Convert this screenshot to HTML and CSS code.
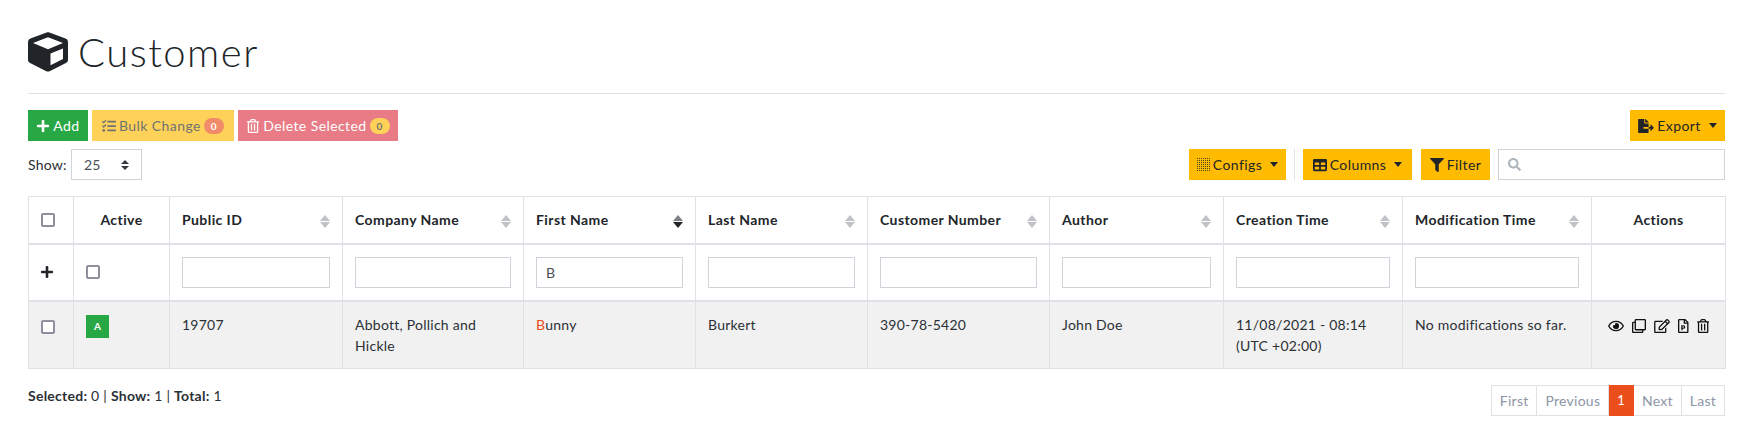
FILE: index.html
```html
<!DOCTYPE html>
<html lang="en">
<head>
    <meta charset="UTF-8">
    <title>Customer</title>
    <link rel="stylesheet" href="styles.css">
</head>
<body>
    <svg class="sprite" xmlns="http://www.w3.org/2000/svg">
        <symbol id="i-plus" viewBox="0 0 448 512"><path d="M416 208H272V64c0-17.67-14.33-32-32-32h-32c-17.67 0-32 14.33-32 32v144H32c-17.67 0-32 14.33-32 32v32c0 17.67 14.33 32 32 32h144v144c0 17.67 14.33 32 32 32h32c17.67 0 32-14.33 32-32V304h144c17.67 0 32-14.33 32-32v-32c0-17.67-14.33-32-32-32z"/></symbol>
        <symbol id="i-trash" viewBox="0 0 448 512"><path d="M268 416h24a12 12 0 0 0 12-12V188a12 12 0 0 0-12-12h-24a12 12 0 0 0-12 12v216a12 12 0 0 0 12 12zM432 80h-82.41l-34-56.7A48 48 0 0 0 274.41 0H173.59a48 48 0 0 0-41.16 23.3L98.41 80H16A16 16 0 0 0 0 96v16a16 16 0 0 0 16 16h16v336a48 48 0 0 0 48 48h288a48 48 0 0 0 48-48V128h16a16 16 0 0 0 16-16V96a16 16 0 0 0-16-16zM171.84 50.91A6 6 0 0 1 177 48h94a6 6 0 0 1 5.15 2.91L293.61 80H154.39zM368 464H80V128h288zm-212-48h24a12 12 0 0 0 12-12V188a12 12 0 0 0-12-12h-24a12 12 0 0 0-12 12v216a12 12 0 0 0 12 12z"/></symbol>
    </svg>

    <main class="page">
        <h1 class="title">
            <svg class="title-icon" viewBox="0 0 512 512"><path d="M239.1 6.3l-208 78c-18.7 7-31.1 25-31.1 45v225.1c0 18.2 10.3 34.8 26.5 42.9l208 104c13.5 6.8 29.4 6.8 42.9 0l208-104c16.3-8.1 26.5-24.8 26.5-42.9V129.3c0-20-12.4-37.9-31.1-44.9l-208-78C262 2.2 250 2.2 239.1 6.3zM256 68.4l192 72v1.1l-192 78-192-78v-1.1l192-72zm32 356V275.5l160-65v133.9l-160 80z"/></svg>
            Customer
        </h1>
        <hr class="divider">

        <div class="toolbar">
            <div class="group">
                <button class="btn btn-green btn-add"><svg class="ico"><use href="#i-plus"/></svg> Add</button>
                <button class="btn btn-yellow btn-off btn-bulk">
                    <svg class="ico" viewBox="0 0 512 512"><path d="M139.61 35.5a12 12 0 0 0-17 0L58.93 98.81l-22.7-22.12a12 12 0 0 0-17 0L3.53 92.41a12 12 0 0 0 0 17l47.59 47.4a12.78 12.78 0 0 0 17.61 0l15.59-15.62L156.52 69a12.09 12.09 0 0 0 .09-17zm0 159.19a12 12 0 0 0-17 0l-63.68 63.72-22.7-22.1a12 12 0 0 0-17 0L3.53 252a12 12 0 0 0 0 17L51 316.5a12.77 12.77 0 0 0 17.6 0l15.7-15.69 72.2-72.22a12 12 0 0 0 .09-16.9zM64 368c-26.49 0-48.59 21.5-48.59 48S37.53 464 64 464a48 48 0 0 0 0-96zm432 16H208a16 16 0 0 0-16 16v32a16 16 0 0 0 16 16h288a16 16 0 0 0 16-16v-32a16 16 0 0 0-16-16zm0-320H208a16 16 0 0 0-16 16v32a16 16 0 0 0 16 16h288a16 16 0 0 0 16-16V80a16 16 0 0 0-16-16zm0 160H208a16 16 0 0 0-16 16v32a16 16 0 0 0 16 16h288a16 16 0 0 0 16-16v-32a16 16 0 0 0-16-16z"/></svg>
                    Bulk Change <span class="count count-orange">0</span>
                </button>
                <button class="btn btn-red btn-off btn-delete"><svg class="ico"><use href="#i-trash"/></svg> Delete Selected <span class="count count-yellow">0</span></button>
            </div>
            <div class="group">
                <button class="btn btn-yellow btn-export">
                    <svg class="ico ico-wide" viewBox="0 0 576 512"><path d="M384 121.9c0-6.3-2.5-12.4-7-16.9L279.1 7c-4.5-4.5-10.6-7-17-7H256v128h128zM571 308l-95.7-96.4c-10.1-10.1-27.4-3-27.4 11.3V288h-64v64h64v65.2c0 14.3 17.3 21.4 27.4 11.3L571 332c6.6-6.6 6.6-17.4 0-24zm-379 28v-32c0-8.8 7.2-16 16-16h176V160H248c-13.2 0-24-10.8-24-24V0H24C10.7 0 0 10.7 0 24v464c0 13.3 10.7 24 24 24h336c13.3 0 24-10.7 24-24V352H208c-8.8 0-16-7.2-16-16z"/></svg>
                    Export <span class="caret"></span>
                </button>
            </div>
        </div>

        <div class="toolbar toolbar-second">
            <div class="group show">
                <label class="show-label" for="pageSize">Show:</label>
                <div class="select-wrap">
                    <select id="pageSize" class="select"><option>25</option><option>50</option><option>100</option></select>
                </div>
            </div>
            <div class="group tools">
                <button class="btn btn-yellow btn-configs">
                    <svg class="ico ico-dots" viewBox="0 0 13 13">
                        <defs><pattern id="dots" width="2" height="2" patternUnits="userSpaceOnUse"><rect width="1" height="1"/></pattern></defs>
                        <rect width="13" height="13" fill="url(#dots)"/>
                    </svg>
                    Configs <span class="caret"></span>
                </button>
                <span class="sep"></span>
                <button class="btn btn-yellow btn-columns">
                    <svg class="ico" viewBox="0 0 512 512"><path d="M464 32H48C21.49 32 0 53.49 0 80v352c0 26.51 21.49 48 48 48h416c26.51 0 48-21.49 48-48V80c0-26.51-21.49-48-48-48zM224 416H64v-96h160v96zm0-160H64v-96h160v96zm224 160H288v-96h160v96zm0-160H288v-96h160v96z"/></svg>
                    Columns <span class="caret"></span>
                </button>
                <button class="btn btn-yellow btn-filter">
                    <svg class="ico" viewBox="0 0 512 512"><path d="M487.976 0H24.028C2.71 0-8.047 25.866 7.058 40.971L192 225.941V432c0 7.831 3.821 15.17 10.237 19.662l80 55.98C298.02 518.69 320 507.493 320 487.98V225.941l184.947-184.97C520.021 25.896 509.338 0 487.976 0z"/></svg>
                    Filter
                </button>
                <div class="search">
                    <svg class="search-icon" viewBox="0 0 512 512"><path d="M505 442.7L405.3 343c-4.5-4.5-10.6-7-17-7H372c27.6-35.3 44-79.7 44-128C416 93.1 322.9 0 208 0S0 93.1 0 208s93.1 208 208 208c48.3 0 92.7-16.4 128-44v16.3c0 6.4 2.5 12.5 7 17l99.7 99.7c9.4 9.4 24.6 9.4 33.9 0l28.3-28.3c9.4-9.4 9.4-24.6.1-34zM208 336c-70.7 0-128-57.2-128-128 0-70.7 57.2-128 128-128 70.7 0 128 57.2 128 128 0 70.7-57.2 128-128 128z"/></svg>
                    <input class="field search-field" type="text">
                </div>
            </div>
        </div>

        <table class="grid">
            <colgroup>
                <col class="c-check"><col class="c-active"><col class="c-id"><col class="c-company"><col class="c-first"><col class="c-last"><col class="c-number"><col class="c-author"><col class="c-created"><col class="c-modified"><col class="c-actions">
            </colgroup>
            <thead>
                <tr class="head-row">
                    <th><input class="check" type="checkbox"></th>
                    <th class="center">Active</th>
                    <th><div class="th-in">Public ID <span class="sort"></span></div></th>
                    <th><div class="th-in">Company Name <span class="sort"></span></div></th>
                    <th><div class="th-in">First Name <span class="sort sort-active"></span></div></th>
                    <th><div class="th-in">Last Name <span class="sort"></span></div></th>
                    <th><div class="th-in">Customer Number <span class="sort"></span></div></th>
                    <th><div class="th-in">Author <span class="sort"></span></div></th>
                    <th><div class="th-in">Creation Time <span class="sort"></span></div></th>
                    <th><div class="th-in">Modification Time <span class="sort"></span></div></th>
                    <th class="center">Actions</th>
                </tr>
                <tr class="filter-row">
                    <td><svg class="add-filter"><use href="#i-plus"/></svg></td>
                    <td><input class="check" type="checkbox"></td>
                    <td><input class="field" type="text"></td>
                    <td><input class="field" type="text"></td>
                    <td><input class="field" type="text" value="B"></td>
                    <td><input class="field" type="text"></td>
                    <td><input class="field" type="text"></td>
                    <td><input class="field" type="text"></td>
                    <td><input class="field" type="text"></td>
                    <td><input class="field" type="text"></td>
                    <td></td>
                </tr>
            </thead>
            <tbody>
                <tr class="data-row">
                    <td><input class="check" type="checkbox"></td>
                    <td><span class="state">A</span></td>
                    <td>19707</td>
                    <td>Abbott, Pollich and Hickle</td>
                    <td><span class="hit">B</span>unny</td>
                    <td>Burkert</td>
                    <td>390-78-5420</td>
                    <td>John Doe</td>
                    <td>11/08/2021 - 08:14<br>(UTC +02:00)</td>
                    <td>No modifications so far.</td>
                    <td class="center">
                        <div class="actions">
                            <svg class="act act-eye" viewBox="0 0 576 512"><path d="M288 144a110.94 110.94 0 0 0-31.24 5 55.4 55.4 0 0 1 7.24 27 56 56 0 0 1-56 56 55.4 55.4 0 0 1-27-7.24A111.71 111.71 0 1 0 288 144zm284.52 97.4C518.29 135.59 410.93 64 288 64S57.68 135.64 3.48 241.41a32.35 32.35 0 0 0 0 29.19C57.71 376.41 165.07 448 288 448s230.32-71.64 284.52-177.41a32.35 32.35 0 0 0 0-29.19zM288 400c-98.65 0-189.09-55-237.93-144C98.91 167 189.34 112 288 112s189.09 55 237.93 144C477.1 345 386.66 400 288 400z"/></svg>
                            <svg class="act" viewBox="0 0 512 512"><path d="M464 0H144c-26.51 0-48 21.49-48 48v48H48c-26.51 0-48 21.49-48 48v320c0 26.51 21.49 48 48 48h320c26.51 0 48-21.49 48-48v-48h48c26.51 0 48-21.49 48-48V48c0-26.51-21.49-48-48-48zM362 464H54a6 6 0 0 1-6-6V150a6 6 0 0 1 6-6h42v224c0 26.51 21.49 48 48 48h224v42a6 6 0 0 1-6 6zm96-96H150a6 6 0 0 1-6-6V54a6 6 0 0 1 6-6h308a6 6 0 0 1 6 6v308a6 6 0 0 1-6 6z"/></svg>
                            <svg class="act act-edit" viewBox="0 0 576 512"><path d="M402.3 344.9l32-32c5-5 13.7-1.5 13.7 5.7V464c0 26.5-21.5 48-48 48H48c-26.5 0-48-21.5-48-48V112c0-26.5 21.5-48 48-48h273.5c7.1 0 10.7 8.6 5.7 13.7l-32 32c-1.5 1.5-3.5 2.3-5.7 2.3H48v352h352V350.5c0-2.1.8-4.1 2.3-5.6zm156.6-201.8L296.3 405.7l-90.4 10c-26.2 2.9-48.5-19.2-45.6-45.6l10-90.4L432.9 17.1c22.9-22.9 59.9-22.9 82.7 0l43.2 43.2c22.9 22.9 22.9 60 .1 82.8zM460.1 174L402 115.9 216.2 301.8l-7.3 65.3 65.3-7.3L460.1 174zm64.8-79.7l-43.2-43.2c-4.1-4.1-10.8-4.1-14.8 0L436 82l58.1 58.1 30.9-30.9c4-4.2 4-10.8-.1-14.9z"/></svg>
                            <svg class="act act-file" viewBox="0 0 384 512"><path d="M369.9 97.9L286 14C277 5 264.8-.1 252.1-.1H48C21.5 0 0 21.5 0 48v416c0 26.5 21.5 48 48 48h288c26.5 0 48-21.5 48-48V131.9c0-12.7-5.1-25-14.1-34zM332.1 128H256V51.9l76.1 76.1zM48 464V48h160v104c0 13.3 10.7 24 24 24h104v288H48zm72-60V236c0-6.6 5.4-12 12-12h69.2c36.7 0 62.8 27 62.8 66.3 0 74.3-68.7 66.5-95.5 66.5V404c0 6.5-5.3 11.9-12 11.9H132c-6.6 0-12-5.4-12-12zm48.5-87.4h23c7.9 0 13.9-2.4 18.1-7.2 8.5-9.8 8.4-28.5.1-37.8-4.1-4.6-9.9-7-17.4-7h-23.9v52z"/></svg>
                            <svg class="act act-trash"><use href="#i-trash"/></svg>
                        </div>
                    </td>
                </tr>
            </tbody>
        </table>

        <div class="footer">
            <div class="summary"><b>Selected:</b> 0 | <b>Show:</b> 1 | <b>Total:</b> 1</div>
            <nav class="pager">
                <a class="pg">First</a><a class="pg">Previous</a><a class="pg pg-on">1</a><a class="pg">Next</a><a class="pg">Last</a>
            </nav>
        </div>
    </main>
</body>
</html>
```

FILE: styles.css
```css
html, body {margin: 0; padding: 0; background: #fff;}
body {font-family: "Lato", "Liberation Sans", sans-serif; font-size: 14px; color: #2b3035; letter-spacing: .25px;}
.sprite {width: 0; height: 0; position: absolute;}
.page {padding: 32px 27px 0 28px;}

.title {display: flex; align-items: center; gap: 10px; margin: 0; height: 40px; font-size: 40px; font-weight: 300; line-height: 40px; letter-spacing: 1.5px; color: #212529;}
.title-icon {width: 40px; height: 40px; fill: #212529;}
.divider {margin: 21px 0 16px; border: 0; border-top: 1px solid #dee2e6;}

.toolbar {display: flex; justify-content: space-between; align-items: center;}
.toolbar-second {margin-top: 8px; margin-bottom: 16px;}
.group {display: flex; align-items: center; gap: 4px;}
.tools {gap: 8px;}

.btn {display: inline-flex; align-items: center; justify-content: center; gap: 3px; height: 31px; padding: 0; border: 0; font: inherit; letter-spacing: .42px; white-space: nowrap; color: #212529;}
.btn-green {background: #28a745; color: #fff;}
.btn-yellow {background: #febb00;}
.btn-red {background: #dc3545; color: #fff;}
.btn-off {opacity: .65;}
.btn-add {width: 60px;}
.btn-bulk {width: 142px;}
.btn-delete {width: 160px;}
.btn-export {width: 95px;}
.btn-configs {width: 97px;}
.btn-columns {width: 109px;}
.btn-filter {width: 69px; margin-left: 1px;}

.ico {width: 14px; height: 14px; fill: currentColor;}
.ico-wide {width: 16px;}
.ico-dots {width: 13px; height: 13px; opacity: .8;}
.caret {width: 0; height: 0; margin-left: 5px; border-top: 5px solid currentColor; border-left: 4px solid transparent; border-right: 4px solid transparent;}
.count {padding: 0 7px; height: 16px; line-height: 16px; border-radius: 8px; font-size: 10px; font-weight: 700; color: #212529;}
.count-orange {background: #ea4e1b; color: #fff;}
.count-yellow {background: #febb00;}

.select-wrap {position: relative;}
.select-wrap::before, .select-wrap::after {content: ""; position: absolute; right: 13px; border-left: 4px solid transparent; border-right: 4px solid transparent; pointer-events: none;}
.select-wrap::before {top: 11px; border-bottom: 4px solid #343a40;}
.select-wrap::after {top: 17px; border-top: 4px solid #343a40;}
.select {display: block; appearance: none; width: 71px; height: 31px; padding: 0 12px; background: #fff; border: 1px solid #ced4da; border-radius: 0; font: inherit; letter-spacing: inherit; color: #495057;}

.sep {width: 1px; height: 31px; background: #e2e4e6;}
.search {position: relative;}
.search-icon {position: absolute; top: 9px; left: 10px; width: 13px; height: 13px; fill: #adb5bd;}
.field {display: block; box-sizing: border-box; width: 100%; height: 31px; padding: 0 9px; border: 1px solid #ced4da; border-radius: 0; background: #fff; font: inherit; letter-spacing: inherit; color: #495057;}
.search-field {width: 227px;}

.grid {width: 1697px; table-layout: fixed; border-collapse: collapse; border: 1px solid #dee2e6;}
.c-check {width: 45px;}
.c-active {width: 96px;}
.c-id {width: 173px;}
.c-company {width: 181px;}
.c-first {width: 172px;}
.c-last {width: 172px;}
.c-number {width: 182px;}
.c-author {width: 174px;}
.c-created {width: 179px;}
.c-modified {width: 189px;}
.c-actions {width: 134px;}
.grid th, .grid td {border: 1px solid #dee2e6; padding: 12px; text-align: left; vertical-align: top; line-height: 21px; font-weight: 400;}
.grid .center {text-align: center;}
.grid th {font-weight: 700; letter-spacing: .42px; color: #212529;}
.head-row th {height: 47px; box-sizing: border-box; vertical-align: middle; padding-top: 0; padding-bottom: 1px; border-bottom: 2px solid #dee2e6;}
.filter-row td {height: 57px; box-sizing: border-box; vertical-align: middle; padding-top: 0; padding-bottom: 0; border-bottom: 2px solid #dee2e6;}
.data-row td {height: 66px; box-sizing: border-box; background: #f1f1f1;}

.th-in {display: flex; justify-content: space-between; align-items: center;}
.sort {position: relative; flex: none; width: 10px; height: 13px; margin-top: 5px;}
.sort::before, .sort::after {content: ""; position: absolute; left: 0; border-left: 5px solid transparent; border-right: 5px solid transparent;}
.sort::before {top: 0; border-bottom: 6px solid #bfc2c6;}
.sort::after {bottom: 0; border-top: 6px solid #bfc2c6;}
.sort-active::before {border-bottom-color: #7d8185;}
.sort-active::after {border-top-color: #212529;}

.check {display: block; appearance: none; box-sizing: border-box; width: 14px; height: 14px; margin: 0; background: #fff; border: 2px solid #8f8f9d; border-radius: 2px;}
.head-row .check {margin-top: 1px;}
.data-row .check {margin-top: 6px;}
.add-filter {display: block; width: 12px; height: 14px; fill: #212529;}

.state {display: block; width: 23px; height: 23px; margin-top: 1px; background: #28a745; color: #fff; font-size: 10px; font-weight: 700; line-height: 23px; text-align: center;}
.hit {color: #ea4e1b;}

.actions {display: flex; justify-content: center; align-items: center; gap: 8px; margin-top: 5px;}
.act {flex: none; width: 14px; height: 14px; fill: #111;}
.act-eye {width: 16px;}
.act-edit {width: 16px;}
.act-file {width: 10.5px;}
.act-trash {width: 12.25px;}

.footer {display: flex; justify-content: space-between; align-items: flex-start; margin-top: 16px;}
.summary {line-height: 21px;}
.pager {display: flex; height: 31px;}
.pg {display: flex; align-items: center; padding: 0 8px; border: 1px solid #dee2e6; border-left: 0; color: #8c96a6; letter-spacing: .25px;}
.pg:first-child {border-left: 1px solid #dee2e6;}
.pg-on {background: #ea4e1b; border-color: #ea4e1b; color: #fff; font-size: 13px; font-weight: 400;}
```
